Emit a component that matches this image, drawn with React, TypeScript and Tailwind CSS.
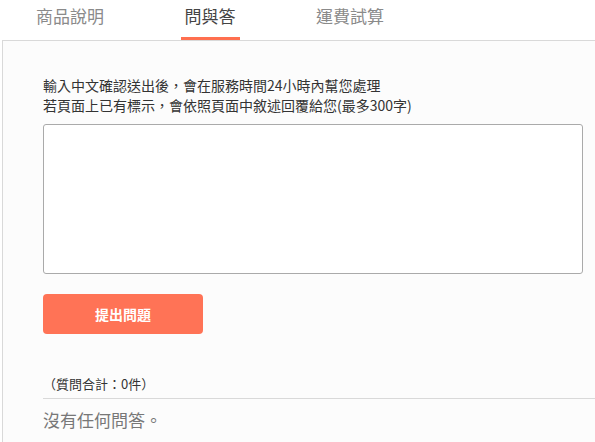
const font = { fontFamily: '"Microsoft JhengHei", "Noto Sans CJK TC", "Noto Sans", sans-serif' };

const tabs = ["商品說明", "問與答", "運費試算"];

export default function App() {
  return (
    <div className="h-[442px] w-[595px] overflow-hidden bg-white" style={font}>
      <div className="flex h-10">
        {tabs.map((t, i) => (
          <div key={t} className="flex w-[140px] justify-center">
            <span
              className={
                i === 1
                  ? "h-10 border-b-[3px] border-[#ff6f4f] px-[4px] pt-[4px] text-[17px] leading-[24px] text-[#444]"
                  : "h-10 px-[4px] pt-[4px] text-[17px] leading-[24px] text-[#8a8a8a]"
              }
            >
              {t}
            </span>
          </div>
        ))}
      </div>
      <div className="ml-[2px] h-full border-l border-t border-[#d9d9d9] bg-[#fcfcfc] pl-[40px] pt-[34px]">
        <p className="text-[14px] leading-[20px] text-[#333]">
          輸入中文確認送出後，會在服務時間24小時內幫您處理
          <br />
          若頁面上已有標示，會依照頁面中敘述回覆給您(最多300字)
        </p>
        <textarea className="mt-[9px] block h-[150px] w-[540px] resize-none rounded-[3px] border border-[#aaa] bg-white" />
        <button className="mt-[20px] block h-10 w-[160px] rounded-[4px] bg-[#ff7356] text-[14px] font-semibold text-white">
          提出問題
        </button>
        <p className="mt-[40px] text-[13px] leading-[20px] text-[#333]">（質問合計：0件）</p>
        <div className="mt-[4px] border-t border-[#d9d9d9] pt-[9px] text-[17px] leading-[24px] text-[#777]">
          沒有任何問答。
        </div>
      </div>
    </div>
  );
}
